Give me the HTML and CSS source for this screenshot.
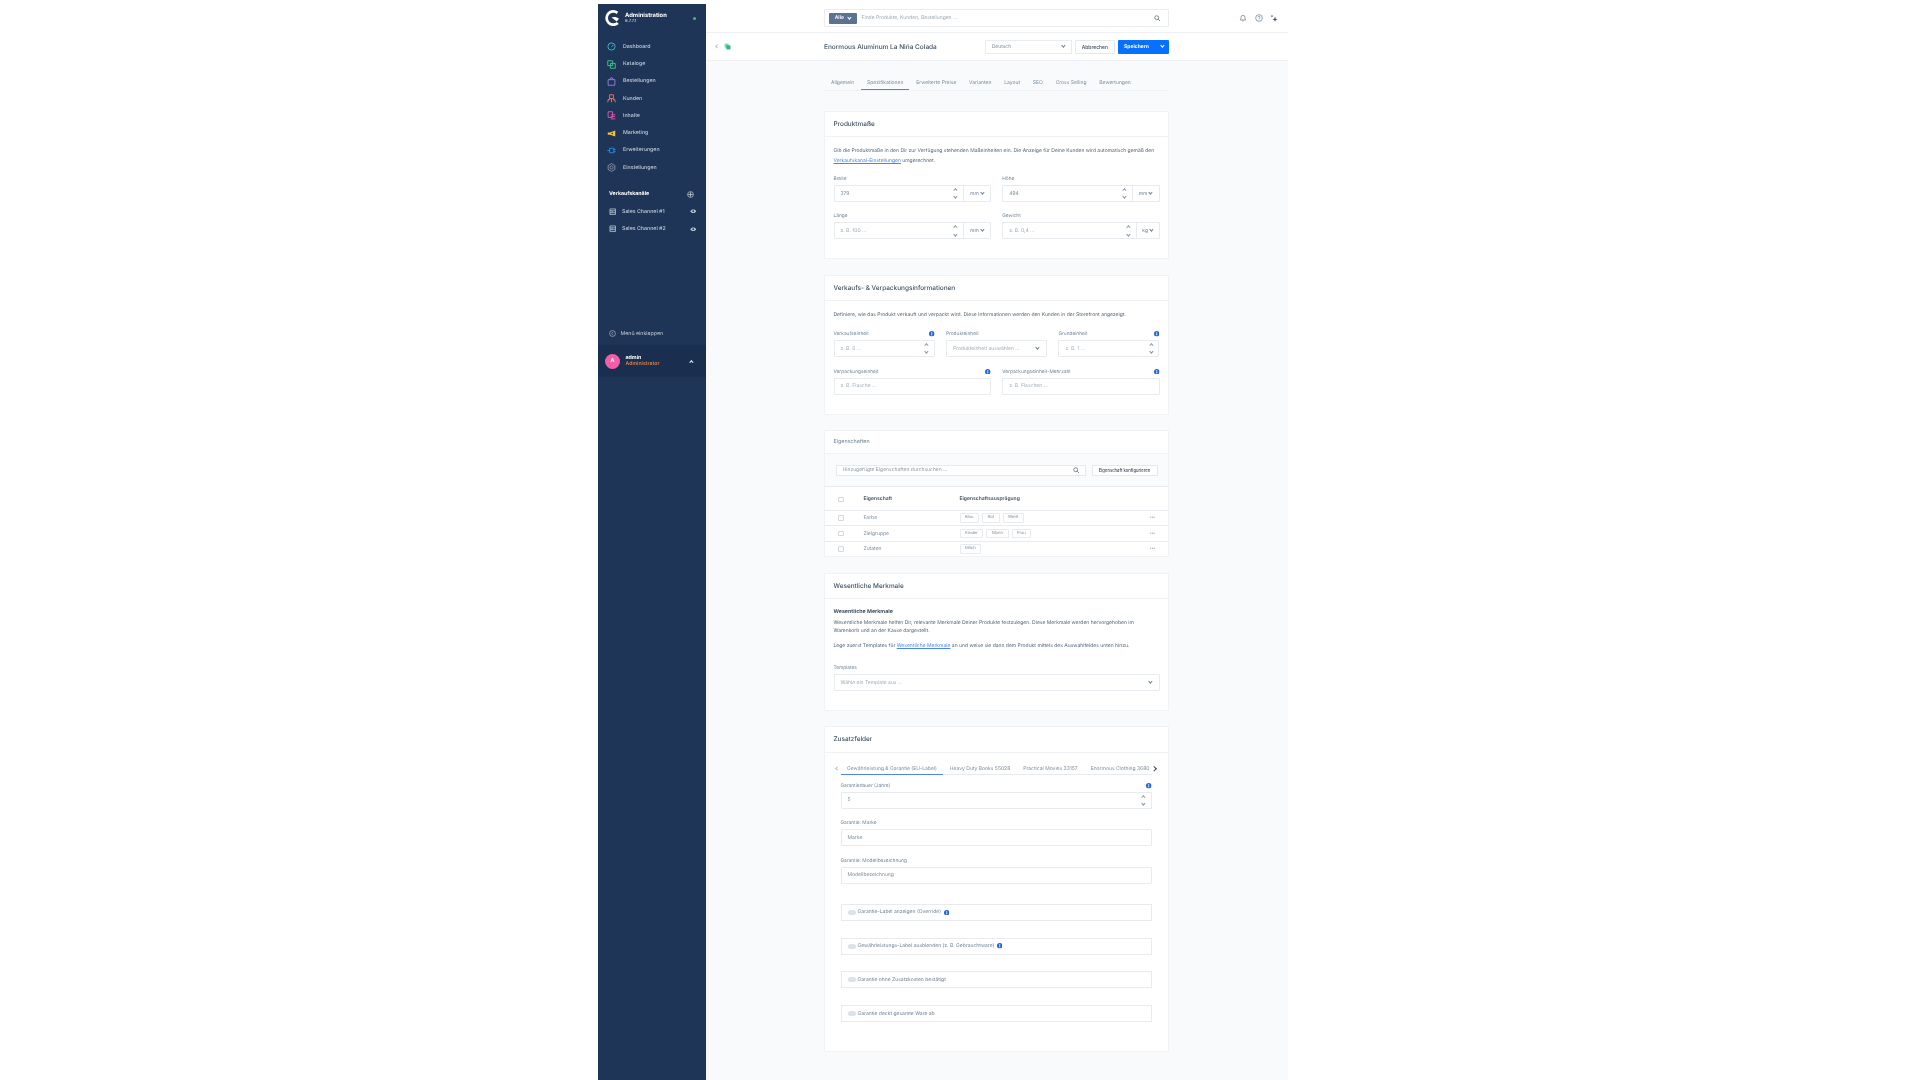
FILE: index.html
```html
<!DOCTYPE html>
<html lang="de">
<head>
    <meta charset="UTF-8">
    <title>Enormous Aluminum La Niña Colada</title>
    <link rel="stylesheet" href="styles.css">
</head>
<body>
<svg class="defs" width="0" height="0">
    <symbol id="i-info" viewBox="0 0 12 12"><circle cx="6" cy="6" r="6" fill="#1f66d6"/><rect x="5" y="5" width="2" height="4.5" fill="#fff"/><rect x="5" y="2.4" width="2" height="1.8" fill="#fff"/></symbol>
    <symbol id="i-search" viewBox="0 0 12 12"><circle cx="5" cy="5" r="3.6" fill="none" stroke="#52667a" stroke-width="1.4"/><path d="M7.8 7.8 11 11" stroke="#52667a" stroke-width="1.6"/></symbol>
    <symbol id="i-store" viewBox="0 0 12 12"><path d="M1.5 1.5h9v9h-9zM1.5 4.5h9M1.5 7.5h9M5 4.5v3" fill="none" stroke="#b8c4d2" stroke-width="1.3"/></symbol>
    <symbol id="i-eye" viewBox="0 0 12 12"><path d="M.5 6C2 3.6 4 2.6 6 2.6S10 3.6 11.500 6C10 8.400 8 9.400 6 9.400S2 8.400.5 6z" fill="#c3ced9"/><circle cx="6" cy="6" r="1.700" fill="#1f3558"/></symbol>
</svg>
<div class="app">
    <aside class="sidebar">
        <div class="brand">
            <svg class="logo" viewBox="0 0 20 20"><path d="M15.500 3.600A8.300 8.300 0 1 0 16 16.200" fill="none" stroke="#fff" stroke-width="3.400"/><path d="M8 9.500c3-1.500 7-.8 9.500 1.500l-3 3.500C12.500 12.500 10 11 8 9.500z" fill="#fff"/></svg>
            <div class="brand-text">
                <strong>Administration</strong>
                <span>6.7.7.1</span>
            </div>
            <i class="status-dot"></i>
        </div>
        <nav class="nav">
            <a class="nav-item"><svg viewBox="0 0 12 12"><circle cx="6" cy="6" r="4.800" fill="none" stroke="#3fb6c9" stroke-width="1.300"/><path d="M6 6.500 8 4" stroke="#3fb6c9" stroke-width="1.300"/></svg>Dashboard</a>
            <a class="nav-item"><svg viewBox="0 0 12 12"><path d="M1 1h6.500v6.500H1zM4.500 4.500H11V11H4.500z" fill="none" stroke="#3cc08f" stroke-width="1.300"/></svg>Kataloge</a>
            <a class="nav-item"><svg viewBox="0 0 12 12"><path d="M1.500 3.500h9V11h-9zM3.500 3.500 5 1h2l1.500 2.500" fill="none" stroke="#8a7bdc" stroke-width="1.300"/></svg>Bestellungen</a>
            <a class="nav-item"><svg viewBox="0 0 12 12"><path d="M3.500 1h5v5h-5zM1 11c0-3 2-4.500 3-5M11 11c0-3-2-4.500-3-5M1 7.500h3M8 7.500h3M6 6v5" fill="none" stroke="#e5775c" stroke-width="1.300"/></svg>Kunden</a>
            <a class="nav-item"><svg viewBox="0 0 12 12"><path d="M1.500 1h6v7.500h-6zM5 5h6M5 7.500h6M5 10.500h6" fill="none" stroke="#d957a8" stroke-width="1.300"/></svg>Inhalte</a>
            <a class="nav-item"><svg viewBox="0 0 12 12"><path d="M11 2 4 4.500H1v3h3L11 10z" fill="#f0c43c"/><circle cx="7" cy="6" r="1.100" fill="#1f3558"/></svg>Marketing</a>
            <a class="nav-item"><svg viewBox="0 0 12 12"><path d="M3.500 3h5.500v6H3.500zM.5 6h3M9 4.500h2.500M9 7.500h2.500" fill="none" stroke="#1c8fe0" stroke-width="1.300"/></svg>Erweiterungen</a>
            <a class="nav-item"><svg viewBox="0 0 12 12"><circle cx="6" cy="6" r="2" fill="none" stroke="#8a97a8" stroke-width="1.200"/><path d="M6 .8 10.500 3.400v5.200L6 11.200 1.500 8.600V3.400z" fill="none" stroke="#8a97a8" stroke-width="1.200"/></svg>Einstellungen</a>
        </nav>
        <div class="channels-head">
            <strong>Verkaufskanäle</strong>
            <svg viewBox="0 0 12 12"><circle cx="6" cy="6" r="5" fill="none" stroke="#c3ced9" stroke-width="1.200"/><path d="M6 2v8M2 6h8" stroke="#c3ced9" stroke-width="1.400"/></svg>
        </div>
        <a class="channel"><svg><use href="#i-store"/></svg><span>Sales Channel #1</span><svg class="eye"><use href="#i-eye"/></svg></a>
        <a class="channel"><svg><use href="#i-store"/></svg><span>Sales Channel #2</span><svg class="eye"><use href="#i-eye"/></svg></a>
        <div class="collapse">
            <svg viewBox="0 0 12 12"><circle cx="6" cy="6" r="5" fill="none" stroke="#b8c4d2" stroke-width="1.100"/><path d="M7 3.500 4.500 6 7 8.500" fill="none" stroke="#b8c4d2" stroke-width="1.100"/></svg>
            Menü einklappen
        </div>
        <div class="user">
            <div class="avatar">A</div>
            <div class="user-text">
                <strong>admin</strong>
                <span>Administrator</span>
            </div>
            <i class="chev chev-up chev-light"></i>
        </div>
    </aside>

    <div class="page">
        <header class="topbar">
            <div class="global-search">
                <span class="scope">Alle <i class="chev chev-light"></i></span>
                <span class="search-text">Finde Produkte, Kunden, Bestellungen ...</span>
                <svg class="icon-search"><use href="#i-search"/></svg>
            </div>
            <div class="top-icons">
                <svg viewBox="0 0 12 12"><path d="M2 9c1-1 1-2 1-4a3 3 0 0 1 6 0c0 2 0 3 1 4zM5 10.500h2" fill="none" stroke="#52667a" stroke-width=".9"/></svg>
                <svg viewBox="0 0 12 12"><circle cx="6" cy="6" r="5" fill="none" stroke="#52667a" stroke-width=".9"/><path d="M4.500 4.800C4.500 3 7.500 3 7.500 4.800 7.500 6 6 6 6 7.300M6 8.300v1" fill="none" stroke="#52667a" stroke-width=".9"/></svg>
                <svg viewBox="0 0 12 12"><path d="M7.500 3.500 8.600 7l3 1-3 1-1.100 3-1-3-3-1 3-1zM3 1l.6 1.600L5 3l-1.400.6L3 5l-.6-1.400L1 3l1.400-.4z" fill="#3d4f63"/></svg>
            </div>
        </header>

        <div class="smartbar">
            <div class="smart-left">
                <i class="chev chev-left"></i>
                <svg viewBox="0 0 12 12"><path d="M1 1h7v7H1z" fill="#7fdcb5"/><path d="M4 4h7v7H4z" fill="#2fb586"/></svg>
            </div>
            <div class="smart-main">
                <h1>Enormous Aluminum La Niña Colada</h1>
                <div class="smart-actions">
                    <div class="lang-select">Deutsch <i class="chev chev-dark"></i></div>
                    <button class="btn">Abbrechen</button>
                    <div class="btn-save"><span>Speichern</span><i class="chev chev-light"></i></div>
                </div>
            </div>
        </div>

        <main class="content">
            <div class="tabs">
                <a>Allgemein</a>
                <a class="active">Spezifikationen</a>
                <a>Erweiterte Preise</a>
                <a>Varianten</a>
                <a>Layout</a>
                <a>SEO</a>
                <a>Cross Selling</a>
                <a>Bewertungen</a>
            </div>

            <section class="card">
                <h2 class="card-title">Produktmaße</h2>
                <div class="card-body">
                    <p class="lead">Gib die Produktmaße in den Dir zur Verfügung stehenden Maßeinheiten ein. Die Anzeige für Deine Kunden wird automatisch gemäß den <a>Verkaufskanal-Einstellungen</a> umgerechnet.</p>
                    <div class="row row-2">
                        <div class="field">
                            <label>Breite</label>
                            <div class="input"><span class="value">379</span><span class="stepper"><i class="chev chev-up"></i><i class="chev"></i></span><span class="unit">mm <i class="chev chev-dark"></i></span></div>
                        </div>
                        <div class="field">
                            <label>Höhe</label>
                            <div class="input"><span class="value">494</span><span class="stepper"><i class="chev chev-up"></i><i class="chev"></i></span><span class="unit">mm <i class="chev chev-dark"></i></span></div>
                        </div>
                        <div class="field">
                            <label>Länge</label>
                            <div class="input"><span>z. B. 100 ...</span><span class="stepper"><i class="chev chev-up"></i><i class="chev"></i></span><span class="unit">mm <i class="chev chev-dark"></i></span></div>
                        </div>
                        <div class="field">
                            <label>Gewicht</label>
                            <div class="input"><span>z. B. 0,4 ...</span><span class="stepper"><i class="chev chev-up"></i><i class="chev"></i></span><span class="unit unit-kg">kg <i class="chev chev-dark"></i></span></div>
                        </div>
                    </div>
                </div>
            </section>

            <section class="card">
                <h2 class="card-title">Verkaufs- &amp; Verpackungsinformationen</h2>
                <div class="card-body">
                    <p class="lead lead-one">Definiere, wie das Produkt verkauft und verpackt wird. Diese Informationen werden den Kunden in der Storefront angezeigt.</p>
                    <div class="row row-3">
                        <div class="field">
                            <label>Verkaufseinheit <svg class="info"><use href="#i-info"/></svg></label>
                            <div class="input"><span>z. B. 6 ...</span><span class="stepper"><i class="chev chev-up"></i><i class="chev"></i></span></div>
                        </div>
                        <div class="field">
                            <label>Produkteinheit</label>
                            <div class="input"><span>Produkteinheit auswählen ...</span><i class="chev chev-dark"></i></div>
                        </div>
                        <div class="field">
                            <label>Grundeinheit <svg class="info"><use href="#i-info"/></svg></label>
                            <div class="input"><span>z. B. 1 ...</span><span class="stepper"><i class="chev chev-up"></i><i class="chev"></i></span></div>
                        </div>
                    </div>
                    <div class="row row-2">
                        <div class="field">
                            <label>Verpackungseinheit <svg class="info"><use href="#i-info"/></svg></label>
                            <div class="input"><span>z. B. Flasche ...</span></div>
                        </div>
                        <div class="field">
                            <label>Verpackungseinheit-Mehrzahl <svg class="info"><use href="#i-info"/></svg></label>
                            <div class="input"><span>z. B. Flaschen ...</span></div>
                        </div>
                    </div>
                </div>
            </section>

            <section class="card card-props">
                <h2 class="card-title props-title">Eigenschaften</h2>
                <div class="props-toolbar">
                    <div class="props-search"><span>Hinzugefügte Eigenschaften durchsuchen ...</span><svg class="icon-search"><use href="#i-search"/></svg></div>
                    <button class="btn btn-props">Eigenschaft konfigurieren</button>
                </div>
                <div class="prop-row prop-head">
                    <i class="check"></i>
                    <span class="prop-name">Eigenschaft</span>
                    <span class="prop-values">Eigenschaftsausprägung</span>
                </div>
                <div class="prop-row">
                    <i class="check"></i>
                    <span class="prop-name">Farbe</span>
                    <span class="prop-values"><b>Blau</b><b>Rot</b><b>Weiß</b></span>
                    <span class="dots">···</span>
                </div>
                <div class="prop-row">
                    <i class="check"></i>
                    <span class="prop-name">Zielgruppe</span>
                    <span class="prop-values"><b>Kinder</b><b>Mann</b><b>Frau</b></span>
                    <span class="dots">···</span>
                </div>
                <div class="prop-row">
                    <i class="check"></i>
                    <span class="prop-name">Zutaten</span>
                    <span class="prop-values"><b>Milch</b></span>
                    <span class="dots">···</span>
                </div>
            </section>

            <section class="card">
                <h2 class="card-title">Wesentliche Merkmale</h2>
                <div class="card-body">
                    <h3 class="sub-title">Wesentliche Merkmale</h3>
                    <p class="copy">Wesentliche Merkmale helfen Dir, relevante Merkmale Deiner Produkte festzulegen. Diese Merkmale werden hervorgehoben im Warenkorb und an der Kasse dargestellt.</p>
                    <p class="copy copy-gap">Lege zuerst Templates für <a>Wesentliche Merkmale</a> an und weise sie dann dem Produkt mittels des Auswahlfeldes unten hinzu.</p>
                    <div class="field">
                        <label>Templates</label>
                        <div class="input"><span>Wähle ein Template aus ...</span><i class="chev chev-dark"></i></div>
                    </div>
                </div>
            </section>

            <section class="card">
                <h2 class="card-title">Zusatzfelder</h2>
                <div class="card-body extra-body">
                    <div class="extra-tabs">
                        <i class="chev chev-left"></i>
                        <div class="extra-list">
                            <a class="active">Gewährleistung &amp; Garantie (EU-Label)</a>
                            <a>Heavy Duty Books 55028</a>
                            <a>Practical Movies 33157</a>
                            <a>Enormous Clothing 3680</a>
                        </div>
                        <i class="chev chev-right"></i>
                    </div>
                    <div class="field">
                        <label>Garantiedauer (Jahre) <svg class="info"><use href="#i-info"/></svg></label>
                        <div class="input input-filled"><span>5</span><span class="stepper"><i class="chev chev-up"></i><i class="chev"></i></span></div>
                    </div>
                    <div class="field">
                        <label>Garantie: Marke</label>
                        <div class="input input-filled"><span>Marke</span></div>
                    </div>
                    <div class="field">
                        <label>Garantie: Modellbezeichnung</label>
                        <div class="input input-filled"><span>Modellbezeichnung</span></div>
                    </div>
                    <div class="toggles">
                        <div class="toggle-box"><i class="switch"></i>Garantie-Label anzeigen (Override) <svg class="info"><use href="#i-info"/></svg></div>
                        <div class="toggle-box"><i class="switch"></i>Gewährleistungs-Label ausblenden (z. B. Gebrauchtware) <svg class="info"><use href="#i-info"/></svg></div>
                        <div class="toggle-box"><i class="switch"></i>Garantie ohne Zusatzkosten bestätigt</div>
                        <div class="toggle-box"><i class="switch"></i>Garantie deckt gesamte Ware ab</div>
                    </div>
                </div>
            </section>
        </main>
    </div>
</div>
</body>
</html>
```

FILE: styles.css
```css
* {
    box-sizing: border-box;
}

html, body {
    height: 100%;
}

body {
    margin: 0;
    background-color: #fff;
    color: #52667a;
    font-family: Inter, "Liberation Sans", sans-serif;
    font-size: 5px;
    text-rendering: geometricPrecision;
    overflow: hidden;
}

h1, h2, h3, p {
    margin: 0;
}

.defs {
    position: absolute;
}

.app {
    display: flex;
    width: 690px;
    height: 1076px;
    margin: 4px 0 0 598px;
    filter: blur(0.25px);
}

/* chevrons */
.chev {
    display: inline-block;
    flex: none;
    width: 2.800px;
    height: 2.800px;
    border-right: 0.5px solid #8796a6;
    border-bottom: 0.5px solid #8796a6;
    transform: translateY(-1px) rotate(45deg);
}

.chev-up {
    transform: translateY(1px) rotate(225deg);
}

.chev-left {
    border-color: #b4bfca;
    transform: rotate(135deg);
}

.chev-right {
    width: 3.500px;
    height: 3.500px;
    border-color: #3d4f63;
    transform: rotate(-45deg);
}

.chev-dark {
    border-color: #6f8296;
}

.chev-light {
    border-color: #fff;
}

/* sidebar */
.sidebar {
    display: flex;
    flex: none;
    flex-direction: column;
    width: 107.500px;
    background-color: #1f3558;
    color: #c3ced9;
    font-size: 5.250px;
    font-weight: 500;
}

.brand {
    display: flex;
    align-items: center;
    height: 28px;
    padding: 0 10px 0 6.500px;
}

.logo {
    width: 16px;
    height: 16px;
}

.brand-text {
    display: flex;
    flex: 1;
    flex-direction: column;
    margin-left: 4.500px;
    color: #c3ced9;
    font-size: 4.200px;
    line-height: 5.500px;
}

.brand-text strong {
    color: #fff;
    font-size: 5.800px;
    font-weight: 700;
    line-height: 7px;
}

.status-dot {
    width: 3px;
    height: 3px;
    border-radius: 50%;
    background-color: #37d046;
}

.nav {
    padding-top: 6.300px;
}

.nav-item {
    display: flex;
    align-items: center;
    height: 17.250px;
    padding-left: 9px;
}

.nav-item svg {
    width: 9px;
    height: 9px;
    margin-right: 7px;
}

.channels-head {
    display: flex;
    align-items: center;
    justify-content: space-between;
    height: 17px;
    margin-top: 9.700px;
    padding: 0 11.500px 0 11px;
    color: #fff;
}

.channels-head svg {
    width: 7px;
    height: 7px;
}

.channel {
    display: flex;
    align-items: center;
    height: 17.250px;
    padding: 0 9.500px 0 10.500px;
}

.channel svg {
    width: 7.500px;
    height: 7.500px;
}

.channel span {
    flex: 1;
    margin-left: 6px;
}

.channel .eye {
    width: 6.500px;
    height: 6.500px;
}

.collapse {
    display: flex;
    align-items: center;
    height: 17px;
    margin-top: auto;
    padding-left: 11px;
    font-weight: 400;
}

.collapse svg {
    width: 7px;
    height: 7px;
    margin-right: 4.500px;
}

.user {
    display: flex;
    align-items: center;
    height: 32px;
    margin-top: 3px;
    margin-bottom: 703px;
    padding: 0 13px 0 7px;
    background-color: #1a2e4f;
}

.avatar {
    display: flex;
    align-items: center;
    justify-content: center;
    width: 15px;
    height: 15px;
    border-radius: 50%;
    background-color: #f25ea8;
    color: #fff;
    font-weight: 700;
}

.user-text {
    display: flex;
    flex: 1;
    flex-direction: column;
    margin-left: 5.500px;
    color: #f08a4b;
    line-height: 6.500px;
}

.user-text strong {
    color: #fff;
    font-weight: 700;
}

/* page */
.page {
    display: flex;
    flex: 1;
    flex-direction: column;
    min-width: 0;
    background-color: #f9fafc;
}

.topbar {
    display: flex;
    align-items: center;
    flex: none;
    height: 29px;
    padding-left: 118.500px;
    border-bottom: 1px solid #eef0f3;
    background-color: #fff;
}

.global-search {
    display: flex;
    align-items: center;
    flex: none;
    width: 345px;
    height: 18px;
    padding: 0 8px 0 4px;
    border: 1px solid #e9edf1;
    border-radius: 1px;
}

.scope {
    display: flex;
    align-items: center;
    justify-content: center;
    gap: 4px;
    width: 27.500px;
    height: 11px;
    border-radius: 1px;
    background-color: #5b7290;
    color: #fff;
    font-weight: 600;
}

.search-text {
    flex: 1;
    margin-left: 5px;
    color: #9aa8b5;
}

.icon-search {
    width: 6.500px;
    height: 6.500px;
}

.top-icons {
    display: flex;
    align-items: center;
    gap: 7.500px;
    margin-left: 70px;
}

.top-icons svg {
    width: 8px;
    height: 8px;
}

.smartbar {
    display: flex;
    flex: none;
    height: 28px;
    border-bottom: 1px solid #eef0f3;
    background-color: #fff;
}

.smart-left {
    display: flex;
    align-items: center;
    width: 118.500px;
    padding-left: 10px;
}

.smart-left svg {
    width: 7px;
    height: 7px;
    margin-left: 5.500px;
}

.smart-main {
    display: flex;
    align-items: center;
    justify-content: space-between;
    width: 345px;
}

h1 {
    color: #3d4f63;
    font-size: 6.500px;
    font-weight: 500;
}

.smart-actions {
    display: flex;
    gap: 3px;
}

.lang-select {
    display: flex;
    align-items: center;
    justify-content: space-between;
    width: 87px;
    height: 14px;
    padding: 0 6px;
    border: 1px solid #e9edf1;
    color: #7b8c9c;
}

.btn {
    height: 14px;
    padding: 0 6px;
    border: 1px solid #e4e9ee;
    border-radius: 1px;
    background-color: #fff;
    color: #3d4f63;
    font-family: inherit;
    font-size: 5px;
    font-weight: 500;
}

.btn-save {
    display: flex;
    align-items: center;
    justify-content: space-between;
    width: 51px;
    height: 14px;
    padding: 0 5px 0 6px;
    border-radius: 1px;
    background-color: #0870ff;
    color: #fff;
    font-weight: 700;
}

.content {
    width: 345px;
    margin-left: 118.500px;
}

.tabs {
    display: flex;
    height: 14px;
    margin-top: 15.500px;
    margin-bottom: 20px;
    padding-left: 1px;
    border-bottom: 1px solid #f0f2f5;
}

.tabs a {
    display: flex;
    align-items: center;
    height: 13px;
    padding: 0 6px;
    margin-right: 0.750px;
    color: #7b8c9c;
}

.tabs a.active {
    border-bottom: 1px solid #4b86e6;
}

.card {
    margin-bottom: 15.300px;
    border: 1px solid #f0f2f5;
    border-radius: 1px;
    background-color: #fff;
}

.card-title {
    height: 25.500px;
    padding-left: 8.500px;
    border-bottom: 1px solid #f0f2f5;
    color: #3d4f63;
    font-size: 6.450px;
    font-weight: 500;
    line-height: 24.500px;
}

.card-body {
    padding: 9px 8.500px 19px;
}

.lead {
    line-height: 10px;
    margin-bottom: 10px;
}

.lead-one {
    margin-bottom: 11px;
}

.lead a,
.copy a {
    color: #4b86e6;
    text-decoration: underline;
    text-decoration-thickness: 0.4px;
}

.row {
    display: grid;
    gap: 11.400px;
}

.row + .row {
    margin-top: 11.400px;
}

.row-2 {
    grid-template-columns: 1fr 1fr;
}

.row-3 {
    grid-template-columns: 1fr 1fr 1fr;
}

label {
    display: flex;
    align-items: center;
    justify-content: space-between;
    height: 9px;
    padding-bottom: 3px;
    color: #6f8296;
    font-size: 4.800px;
}

.info {
    width: 5.500px;
    height: 5.500px;
}

.input {
    display: flex;
    align-items: center;
    justify-content: space-between;
    height: 17px;
    padding-left: 6px;
    border: 1px solid #e7ebef;
    border-radius: 1px;
    background-color: #fff;
    color: #a0adba;
}

.input > span:first-child {
    flex: 1;
}

.input > .chev {
    margin-right: 7px;
}

.input .value,
.input-filled {
    color: #7b8c9c;
}

.stepper {
    display: flex;
    flex-direction: column;
    align-items: center;
    gap: 5.500px;
    width: 14px;
}

.unit {
    display: flex;
    align-items: center;
    justify-content: center;
    gap: 2px;
    width: 27px;
    height: 100%;
    border-left: 1px solid #e7ebef;
    color: #6f8296;
}

.unit-kg {
    width: 23px;
}

/* eigenschaften */
.props-title {
    height: 23px;
    color: #6f8296;
    font-size: 5.400px;
    font-weight: 400;
    line-height: 22px;
}

.props-toolbar {
    display: flex;
    gap: 6px;
    height: 33px;
    padding: 11px 10.500px;
    border-bottom: 1px solid #e7ebef;
    background-color: #fafbfc;
}

.props-search {
    display: flex;
    flex: 1;
    align-items: center;
    justify-content: space-between;
    height: 11px;
    padding: 0 5px 0 6px;
    border: 1px solid #e7ebef;
    background-color: #fff;
    color: #8a99a8;
}

.btn-props {
    flex: none;
    width: 66px;
    height: 11px;
    padding: 0;
    font-size: 4.200px;
}

.prop-row {
    display: flex;
    align-items: center;
    height: 15.500px;
    border-bottom: 1px solid #e7ebef;
    color: #7b8c9c;
}

.prop-row:last-child {
    height: 14.500px;
    border-bottom: 0;
}

.prop-head {
    height: 24px;
    padding-top: 2px;
    color: #3d4f63;
    font-weight: 600;
}

.check {
    flex: none;
    width: 5.500px;
    height: 5.500px;
    margin-left: 13px;
    border: 0.6px solid #d1d9e0;
    border-radius: 1px;
}

.prop-name {
    width: 96px;
    margin-left: 20px;
}

.prop-values {
    display: flex;
    flex: 1;
    gap: 3px;
}

.prop-values b {
    padding: 1px 4.500px;
    border: 1px solid #e7ebef;
    border-radius: 1px;
    font-size: 4.200px;
    font-weight: 400;
    line-height: 5.500px;
}

.dots {
    margin-right: 13px;
    color: #52667a;
    font-weight: 700;
}

/* wesentliche merkmale */
.sub-title {
    color: #3d4f63;
    font-size: 5.300px;
    font-weight: 700;
    line-height: 8px;
    margin-bottom: 3px;
}

.copy {
    line-height: 8px;
}

.copy-gap {
    margin: 7px 0 15px;
}

/* zusatzfelder */
.extra-body {
    padding: 8px 16.500px 29px 15.500px;
}

.extra-tabs {
    position: relative;
    height: 14px;
    margin-bottom: 8px;
    border-bottom: 1px solid #e7ebef;
}

.extra-tabs .chev-left {
    position: absolute;
    top: 6px;
    left: -5px;
}

.extra-tabs .chev-right {
    position: absolute;
    top: 6.500px;
    right: -3.500px;
}

.extra-list {
    display: flex;
    white-space: nowrap;
}

.extra-list a {
    height: 14px;
    padding: 3.500px 6.500px 0;
    color: #7b8c9c;
    line-height: 10px;
}

.extra-list a.active {
    border-bottom: 1px solid #4b86e6;
}

.extra-body .field + .field {
    margin-top: 11.400px;
}

.toggles {
    display: flex;
    flex-direction: column;
    gap: 16.800px;
    margin-top: 20px;
}

.toggle-box {
    display: flex;
    align-items: center;
    gap: 1.500px;
    height: 17px;
    padding-left: 6.500px;
    border: 1px solid #e7ebef;
    color: #6f8296;
}

.switch {
    width: 8px;
    height: 5px;
    border-radius: 2.500px;
    background-color: #dde2e8;
}

.toggle-box .info {
    margin-left: 1px;
}
```
